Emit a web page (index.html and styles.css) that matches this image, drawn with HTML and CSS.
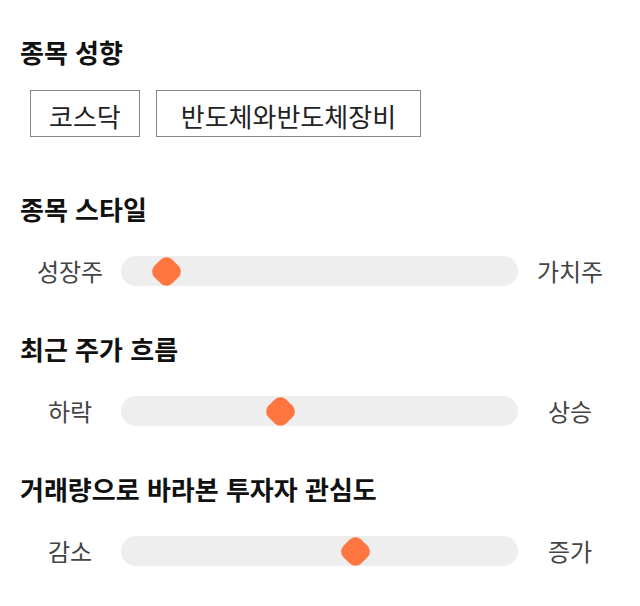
FILE: index.html
```html
<!DOCTYPE html>
<html lang="ko">
<head>
<meta charset="utf-8">
<link rel="stylesheet" href="styles.css">
</head>
<body>
<main class="panel">
  <section class="block block-first">
    <h2 class="title">종목 성향</h2>
    <div class="chips">
      <span class="chip">코스닥</span>
      <span class="chip chip-wide">반도체와반도체장비</span>
    </div>
  </section>

  <section class="block">
    <h2 class="title">종목 스타일</h2>
    <div class="scale">
      <span class="scale-label">성장주</span>
      <div class="track"><span class="thumb" style="left: 45px"></span></div>
      <span class="scale-label">가치주</span>
    </div>
  </section>

  <section class="block">
    <h2 class="title">최근 주가 흐름</h2>
    <div class="scale">
      <span class="scale-label">하락</span>
      <div class="track"><span class="thumb" style="left: 159px"></span></div>
      <span class="scale-label">상승</span>
    </div>
  </section>

  <section class="block">
    <h2 class="title">거래량으로 바라본 투자자 관심도</h2>
    <div class="scale">
      <span class="scale-label">감소</span>
      <div class="track"><span class="thumb" style="left: 234px"></span></div>
      <span class="scale-label">증가</span>
    </div>
  </section>
</main>
</body>
</html>
```

FILE: styles.css
```css
* { box-sizing: border-box; }

html, body {
  margin: 0;
  padding: 0;
  background: #ffffff;
}

body {
  font-family: "Noto Sans CJK KR", "Noto Sans", sans-serif;
  color: #111111;
}

.panel {
  padding: 0 20px;
  width: 640px;
}

.block {
  display: flex;
  flex-direction: column;
}

.block-first {
  padding-top: 36px;
}

.title {
  margin: 0;
  font-size: 26px;
  line-height: 32px;
  font-weight: 700;
  color: #111111;
}

.chips {
  display: flex;
  gap: 16px;
  margin: 22px 0 9px 10px;
}

.chip {
  display: flex;
  align-items: center;
  height: 47px;
  padding: 5px 18px 0;
  border: 1px solid #888888;
  font-size: 26px;
  line-height: 30px;
  color: #222222;
}

.chip-wide {
  padding: 5px 24px 0;
}

.block + .block {
  margin-top: 47px;
}

.scale {
  display: grid;
  grid-template-columns: 100px 400px 100px;
  align-items: center;
  margin-top: 31px;
}

.scale-label {
  text-align: center;
  font-size: 24px;
  line-height: 30px;
  color: #444444;
}

.track {
  position: relative;
  height: 30px;
  margin: 0 2px 0 1px;
  background: #eeeeee;
  border-radius: 15px;
}

.thumb {
  position: absolute;
  top: 50%;
  width: 25px;
  height: 25px;
  margin: -12.5px 0 0 -12.5px;
  background: #ff7640;
  border-radius: 8px;
  transform: rotate(45deg);
}
```
